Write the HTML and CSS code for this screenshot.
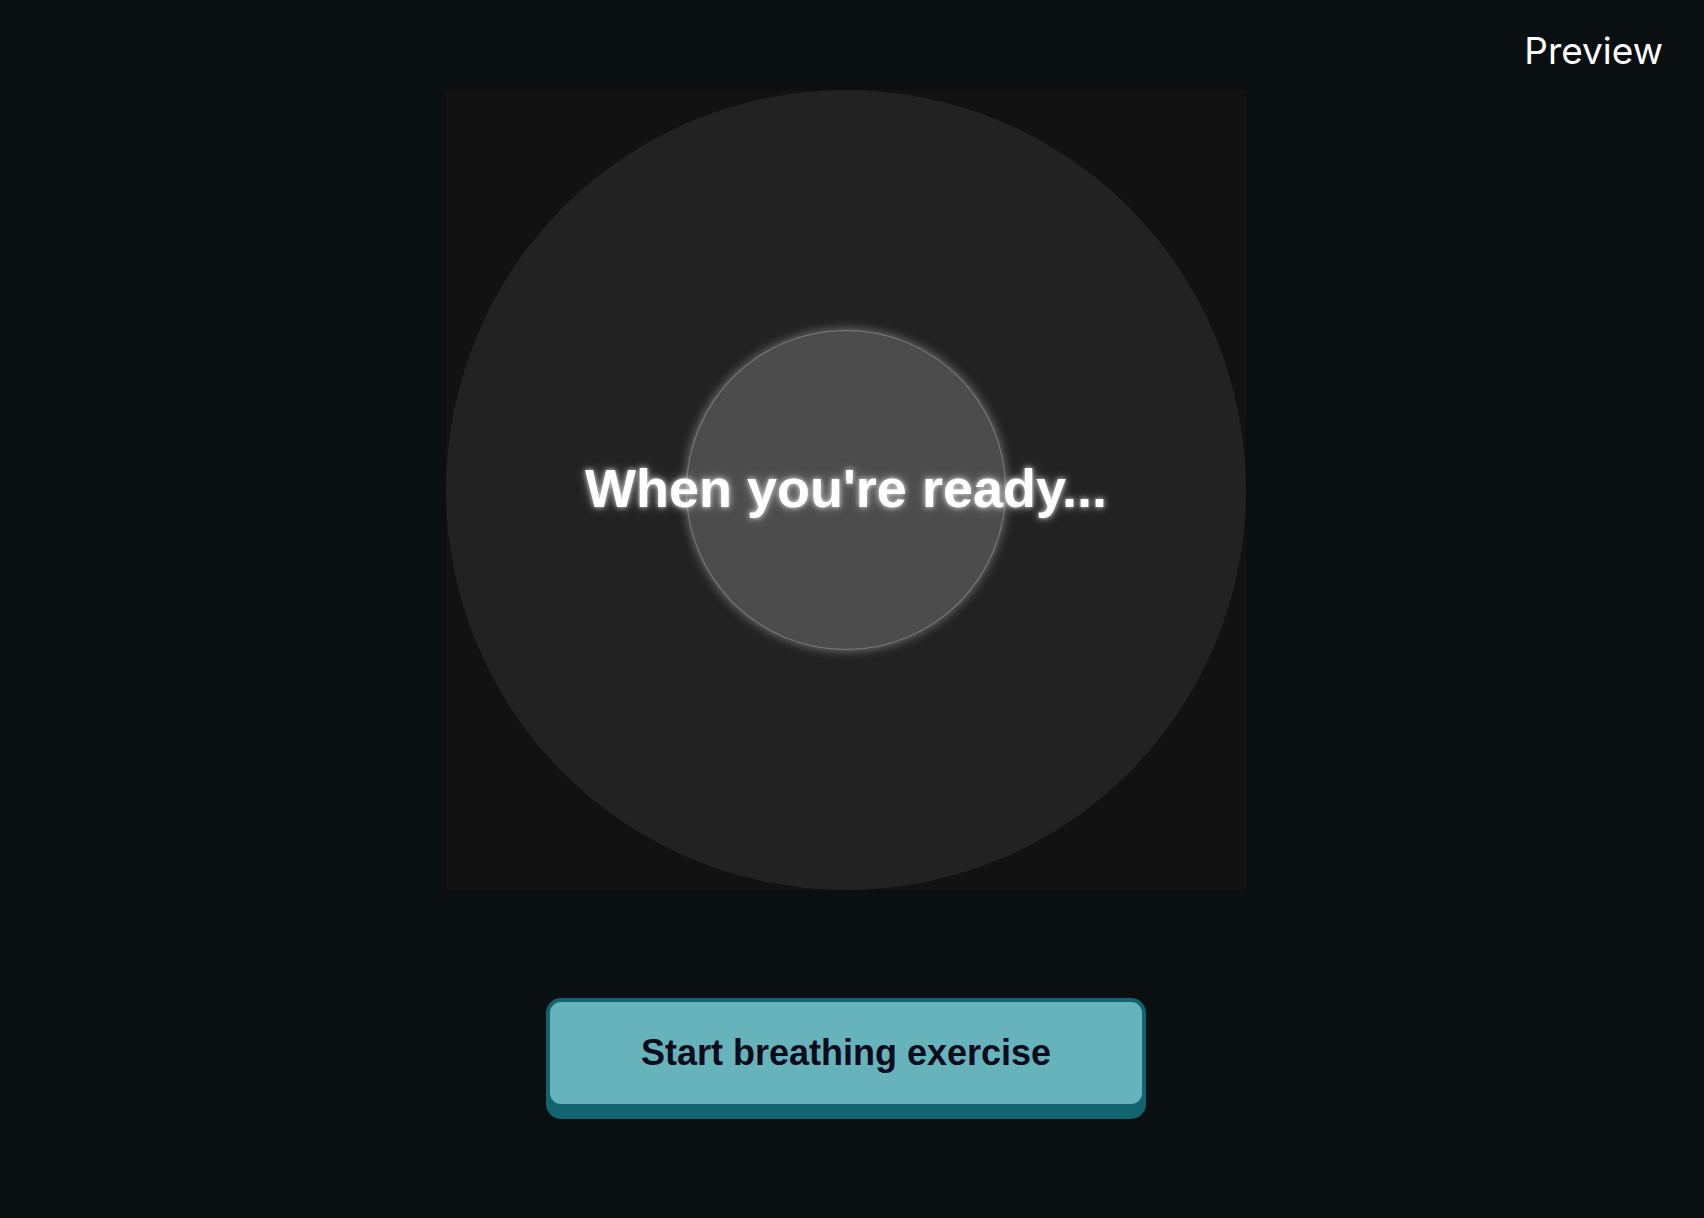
FILE: index.html
```html
<!DOCTYPE html>
<html lang="en">
<head>
<meta charset="utf-8">
<title>Breathing exercise</title>
<link rel="stylesheet" href="styles.css">
</head>
<body>
<header class="topbar">
  <span class="preview">Preview</span>
</header>
<main class="stage">
  <div class="square">
    <div class="outer-circle"></div>
    <div class="inner-circle"></div>
    <h1 class="prompt">When you're ready...</h1>
  </div>
  <button class="start-btn" type="button">Start breathing exercise</button>
</main>
</body>
</html>
```

FILE: styles.css
```css
html, body {
  margin: 0;
  padding: 0;
}
body {
  background: #0a0f12;
  min-height: 1218px;
  font-family: "Liberation Sans", Arial, sans-serif;
}
.topbar {
  display: flex;
  justify-content: flex-end;
  height: 90px;
  padding: 0 41px 0 0;
  box-sizing: border-box;
}
.preview {
  font-family: Inter, "Noto Sans", sans-serif;
  font-size: 37px;
  line-height: 1;
  color: #ffffff;
  margin-top: 32px;
}
.stage {
  display: flex;
  flex-direction: column;
  align-items: center;
  padding-right: 12px;
}
.square {
  width: 800px;
  height: 800px;
  background: #121212;
  display: grid;
  place-items: center;
}
.square > * {
  grid-area: 1 / 1;
}
.outer-circle {
  width: 800px;
  height: 800px;
  border-radius: 50%;
  background: #222222;
}
.inner-circle {
  width: 318px;
  height: 318px;
  border-radius: 50%;
  background: #4d4c4d;
  border: 1.5px solid rgba(255, 255, 255, 0.26);
  box-shadow: 0 0 11px rgba(255, 255, 255, 0.42);
}
.prompt {
  margin: 0 0 5px 0;
  font-size: 54px;
  font-weight: 700;
  color: #ffffff;
  white-space: nowrap;
  text-shadow: 0 0 5px rgba(255, 255, 255, 0.8), 0 0 12px rgba(255, 255, 255, 0.4);
}
.start-btn {
  margin-top: 108px;
  width: 600px;
  height: 110px;
  box-sizing: border-box;
  background: #67b3bb;
  border: 4px solid #126470;
  border-radius: 15px;
  box-shadow: 0 11px 0 #126470;
  font-family: "Liberation Sans", Arial, sans-serif;
  font-size: 36px;
  font-weight: 700;
  color: #0c0c1c;
  padding: 0;
  cursor: pointer;
}
```
